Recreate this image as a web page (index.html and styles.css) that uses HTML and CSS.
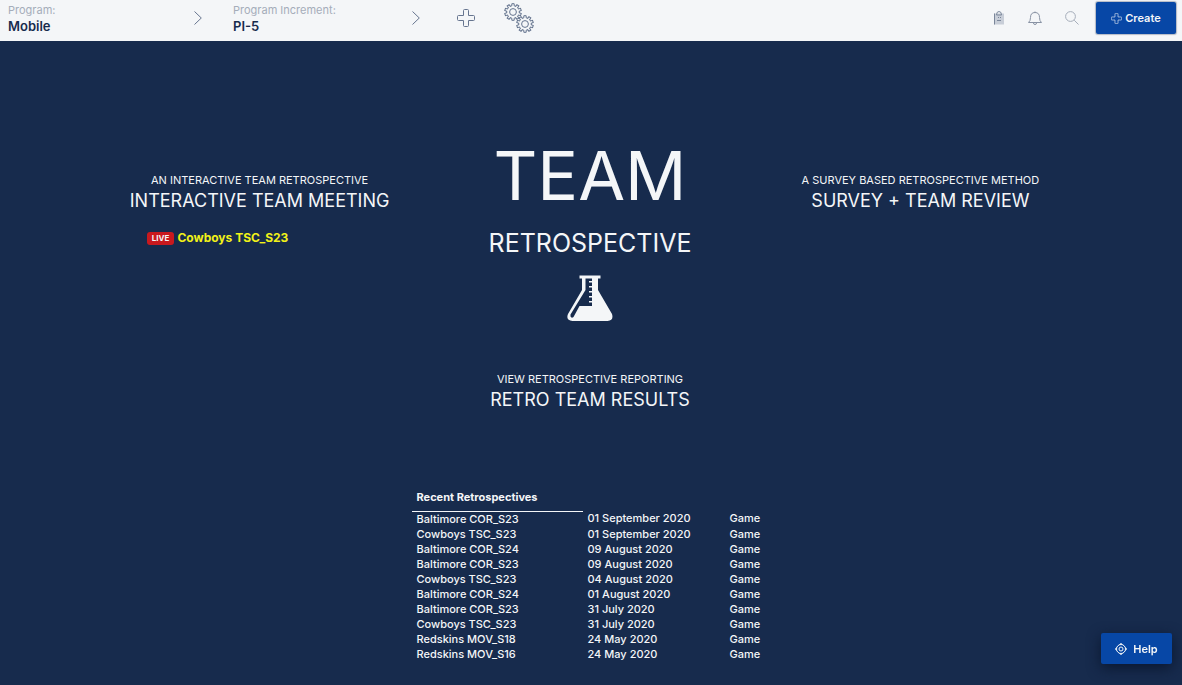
FILE: index.html
```html
<!DOCTYPE html>
<html lang="en">
<head>
<meta charset="utf-8">
<meta name="viewport" content="width=device-width, initial-scale=1">
<title>Team Retrospective</title>
<link rel="stylesheet" href="styles.css">
</head>
<body>
<svg class="defs" aria-hidden="true">
  <defs>
    <path id="tooth" d="M-1.95-5.99-1.2-6.18-1.17-8.3H1.17L1.2-6.18 1.95-5.99"/>
    <g id="gear">
      <circle r="3.4"/>
      <use href="#tooth"/>
      <use href="#tooth" transform="rotate(36)"/>
      <use href="#tooth" transform="rotate(72)"/>
      <use href="#tooth" transform="rotate(108)"/>
      <use href="#tooth" transform="rotate(144)"/>
      <use href="#tooth" transform="rotate(180)"/>
      <use href="#tooth" transform="rotate(216)"/>
      <use href="#tooth" transform="rotate(252)"/>
      <use href="#tooth" transform="rotate(288)"/>
      <use href="#tooth" transform="rotate(324)"/>
    </g>
    <path id="plus" d="M6.5 1.5q0-1 1-1h3q1 0 1 1v5h5q1 0 1 1v3q0 1-1 1h-5v5q0 1-1 1h-3q-1 0-1-1v-5h-5q-1 0-1-1v-3q0-1 1-1h5z"/>
  </defs>
</svg>

<header class="topbar">
  <button class="crumb" type="button">
    <span class="crumb-text"><span class="crumb-label">Program:</span><span class="crumb-value">Mobile</span></span>
    <svg class="chevron" viewBox="0 0 8 14" aria-hidden="true"><path d="M.5.5 7.3 7 .5 13.5"/></svg>
  </button>
  <button class="crumb crumb-wide" type="button">
    <span class="crumb-text"><span class="crumb-label">Program Increment:</span><span class="crumb-value">PI-5</span></span>
    <svg class="chevron" viewBox="0 0 8 14" aria-hidden="true"><path d="M.5.5 7.3 7 .5 13.5"/></svg>
  </button>
  <button class="tool tool-add" type="button" aria-label="Add">
    <svg width="18" height="18" viewBox="0 0 18 18"><use href="#plus"/></svg>
  </button>
  <button class="tool" type="button" aria-label="Settings">
    <svg width="30" height="30" viewBox="0 0 30 30"><use href="#gear" x="9" y="9"/><use href="#gear" x="21" y="21"/></svg>
  </button>
  <div class="actions">
    <button class="tool tool-notes" type="button" aria-label="Notes">
      <svg width="12" height="14" viewBox="0 0 12 14"><path class="notes-fill" d="M1 2.500h10v11H1z"/><path d="M1.500 2.500v11M3.500 4q0-3.500 2.500-3.500T8.500 4zM5 6.500h1m1 0h1M4 9.500h4"/></svg>
    </button>
    <button class="tool tool-bell" type="button" aria-label="Notifications">
      <svg width="14" height="14" viewBox="0 0 14 14"><path d="M7 .5v1M.5 11.500Q2.500 10 2.500 6.500 2.500 1.500 7 1.500t4.500 5q0 3.500 2 5zM5.500 12q0 1.500 1.500 1.500T8.500 12"/></svg>
    </button>
    <button class="tool tool-search" type="button" aria-label="Search">
      <svg width="14" height="14" viewBox="0 0 14 14"><circle cx="5.500" cy="5.500" r="4.900"/><path d="m9.200 9.200 4.300 4.300"/></svg>
    </button>
    <button class="primary create" type="button">
      <svg width="11" height="11" viewBox="0 0 18 18" aria-hidden="true"><use href="#plus"/></svg>
      Create
    </button>
  </div>
</header>

<main class="stage">
  <div class="options">
    <section class="option">
      <a class="choice" href="#meeting"><span class="choice-note">AN INTERACTIVE TEAM RETROSPECTIVE</span><span class="choice-title">INTERACTIVE TEAM MEETING</span></a>
      <a class="live" href="#live"><span class="live-badge">LIVE</span>Cowboys TSC_S23</a>
    </section>
    <section class="brand">
      <h1 class="brand-name">TEAM</h1>
      <p class="brand-sub">RETROSPECTIVE</p>
      <svg class="flask" width="46" height="46" viewBox="0 0 46 46" aria-hidden="true">
        <path class="flask-body" d="M12.500.5h21v3H31v11.500L45 39q2 6.500-4.500 7h-35Q-1.500 45.500 1 39L15 15V3.500h-2.500z"/>
        <path class="flask-air" d="M18.500 3.500H25V6h-3v1.500h3v3.500h-3v1.500h3V16h-3v1.500h3V21h-3v1.500h3V26h-3v1.500h3V31H12.500L6.500 42Q4.500 43.500 3.500 41.500V39.500L18.500 15z"/>
      </svg>
    </section>
    <section class="option">
      <a class="choice" href="#survey"><span class="choice-note">A SURVEY BASED RETROSPECTIVE METHOD</span><span class="choice-title">SURVEY + TEAM REVIEW</span></a>
    </section>
  </div>

  <a class="choice results" href="#results"><span class="choice-note">VIEW RETROSPECTIVE REPORTING</span><span class="choice-title">RETRO TEAM RESULTS</span></a>

  <table class="recent">
    <thead><tr><th scope="col">Recent Retrospectives</th><td></td><td></td></tr></thead>
    <tbody>
      <tr><td>Baltimore COR_S23</td><td>01 September 2020</td><td>Game</td></tr>
      <tr><td>Cowboys TSC_S23</td><td>01 September 2020</td><td>Game</td></tr>
      <tr><td>Baltimore COR_S24</td><td>09 August 2020</td><td>Game</td></tr>
      <tr><td>Baltimore COR_S23</td><td>09 August 2020</td><td>Game</td></tr>
      <tr><td>Cowboys TSC_S23</td><td>04 August 2020</td><td>Game</td></tr>
      <tr><td>Baltimore COR_S24</td><td>01 August 2020</td><td>Game</td></tr>
      <tr><td>Baltimore COR_S23</td><td>31 July 2020</td><td>Game</td></tr>
      <tr><td>Cowboys TSC_S23</td><td>31 July 2020</td><td>Game</td></tr>
      <tr><td>Redskins MOV_S18</td><td>24 May 2020</td><td>Game</td></tr>
      <tr><td>Redskins MOV_S16</td><td>24 May 2020</td><td>Game</td></tr>
    </tbody>
  </table>
</main>

<button class="primary help" type="button">
  <svg width="12" height="12" viewBox="0 0 12 12" aria-hidden="true"><circle cx="6" cy="6" r="4.500"/><circle cx="6" cy="6" r="2"/><path d="M4.500 1.500 6 .5l1.500 1M10.500 4.500l1 1.500-1 1.500M7.500 10.500 6 11.500l-1.500-1M1.500 7.500.5 6l1-1.500"/></svg>
  Help
</button>
</body>
</html>
```
FILE: styles.css
```css
* {
  box-sizing: border-box;
}

body {
  margin: 0;
  min-height: 100vh;
  display: flex;
  flex-direction: column;
  background: #172b4d;
  color: #f4f6f8;
  font-family: Inter, "Liberation Sans", sans-serif;
  font-size: 11px;
}

button {
  border: 0;
  padding: 0;
  background: none;
  font: inherit;
  color: inherit;
  cursor: pointer;
}

a {
  color: inherit;
  text-decoration: none;
}

svg {
  display: block;
  fill: none;
  stroke: currentColor;
}

.defs {
  position: absolute;
  width: 0;
  height: 0;
}

.topbar {
  display: flex;
  align-items: center;
  height: 41px;
  padding: 0 6px 5px 8px;
  background: #f4f6f8;
  color: #66758f;
}

.crumb {
  display: flex;
  align-items: center;
  justify-content: space-between;
  width: 194px;
  margin-right: 31px;
  text-align: left;
}

.crumb-wide {
  width: 187px;
  margin-right: 37px;
}

.crumb-text {
  display: grid;
}

.crumb-label {
  color: #a5adba;
  font-size: 11px;
  line-height: 16px;
}

.crumb-value {
  color: #172b4d;
  font-size: 13px;
  font-weight: 600;
  line-height: 16px;
}

.chevron {
  width: 8px;
  height: 14px;
}

.tool-add {
  margin-right: 29px;
}

.actions {
  display: flex;
  align-items: center;
  gap: 23px;
  margin-left: auto;
}

.tool-notes,
.tool-search {
  color: #a5adba;
}

.tool-bell {
  color: #8993a4;
}

.tool-search {
  margin-right: -6px;
}

.notes-fill {
  fill: #c8ced8;
  stroke: none;
}

.tool-notes {
  color: #7a869a;
}

.primary {
  display: flex;
  align-items: center;
  justify-content: center;
  background: #0747a6;
  color: #f4f6f8;
  font-weight: 600;
}

.create {
  gap: 3px;
  width: 80px;
  height: 32px;
  border-radius: 2px;
  font-size: 11px;
  box-shadow: 0 0 1px 1px #b3bac5;
}

.stage {
  display: flex;
  flex: 1;
  flex-direction: column;
  align-items: center;
  padding: 92px 2px 22px 0;
}

.options {
  display: grid;
  grid-template-columns: repeat(3, 1fr);
  width: 84%;
}

.option {
  padding-top: 39px;
  justify-self: center;
}

.choice {
  display: grid;
  justify-items: center;
}

.choice-note {
  font-size: 11px;
  line-height: 16px;
}

.choice-title {
  font-size: 18px;
  line-height: 26px;
}

.live {
  display: flex;
  align-items: center;
  gap: 3px;
  margin: 16px 0 0 17px;
  color: #f2f218;
  font-size: 12px;
  font-weight: 700;
  line-height: 16px;
}

.live-badge {
  padding: 0 5px;
  border-radius: 3px;
  background: #c9191e;
  color: #f4f6f8;
  font-size: 8px;
  line-height: 13px;
}

.brand {
  display: grid;
  justify-items: center;
  align-content: start;
}

.brand-name {
  margin: 0;
  font-size: 68px;
  font-weight: 400;
  line-height: 84px;
}

.brand-sub {
  margin: 10px 0 16px;
  font-size: 25px;
  line-height: 32px;
}

.flask {
  stroke: none;
}

.flask-body {
  fill: #f4f6f8;
}

.flask-air {
  fill: #172b4d;
}

.results {
  margin-top: 50px;
}

.recent {
  margin-top: 74px;
  border-collapse: collapse;
  font-weight: 500;
  line-height: 15px;
}

.recent td,
.recent th {
  padding: 0 5px;
  text-align: left;
}

.recent th {
  height: 24px;
  padding-bottom: 3px;
  border-bottom: 1px solid #f4f6f8;
  font-weight: 700;
}

.recent td:nth-child(1),
.recent th {
  width: 171px;
}

.recent td:nth-child(2) {
  width: 142px;
}

.recent td:nth-child(3) {
  width: 44px;
}

.help {
  position: fixed;
  right: 10px;
  bottom: 21px;
  gap: 6px;
  width: 71px;
  height: 31px;
  border-radius: 2px;
  font-size: 11px;
  box-shadow: 0 4px 14px #0a1730;
}
```
